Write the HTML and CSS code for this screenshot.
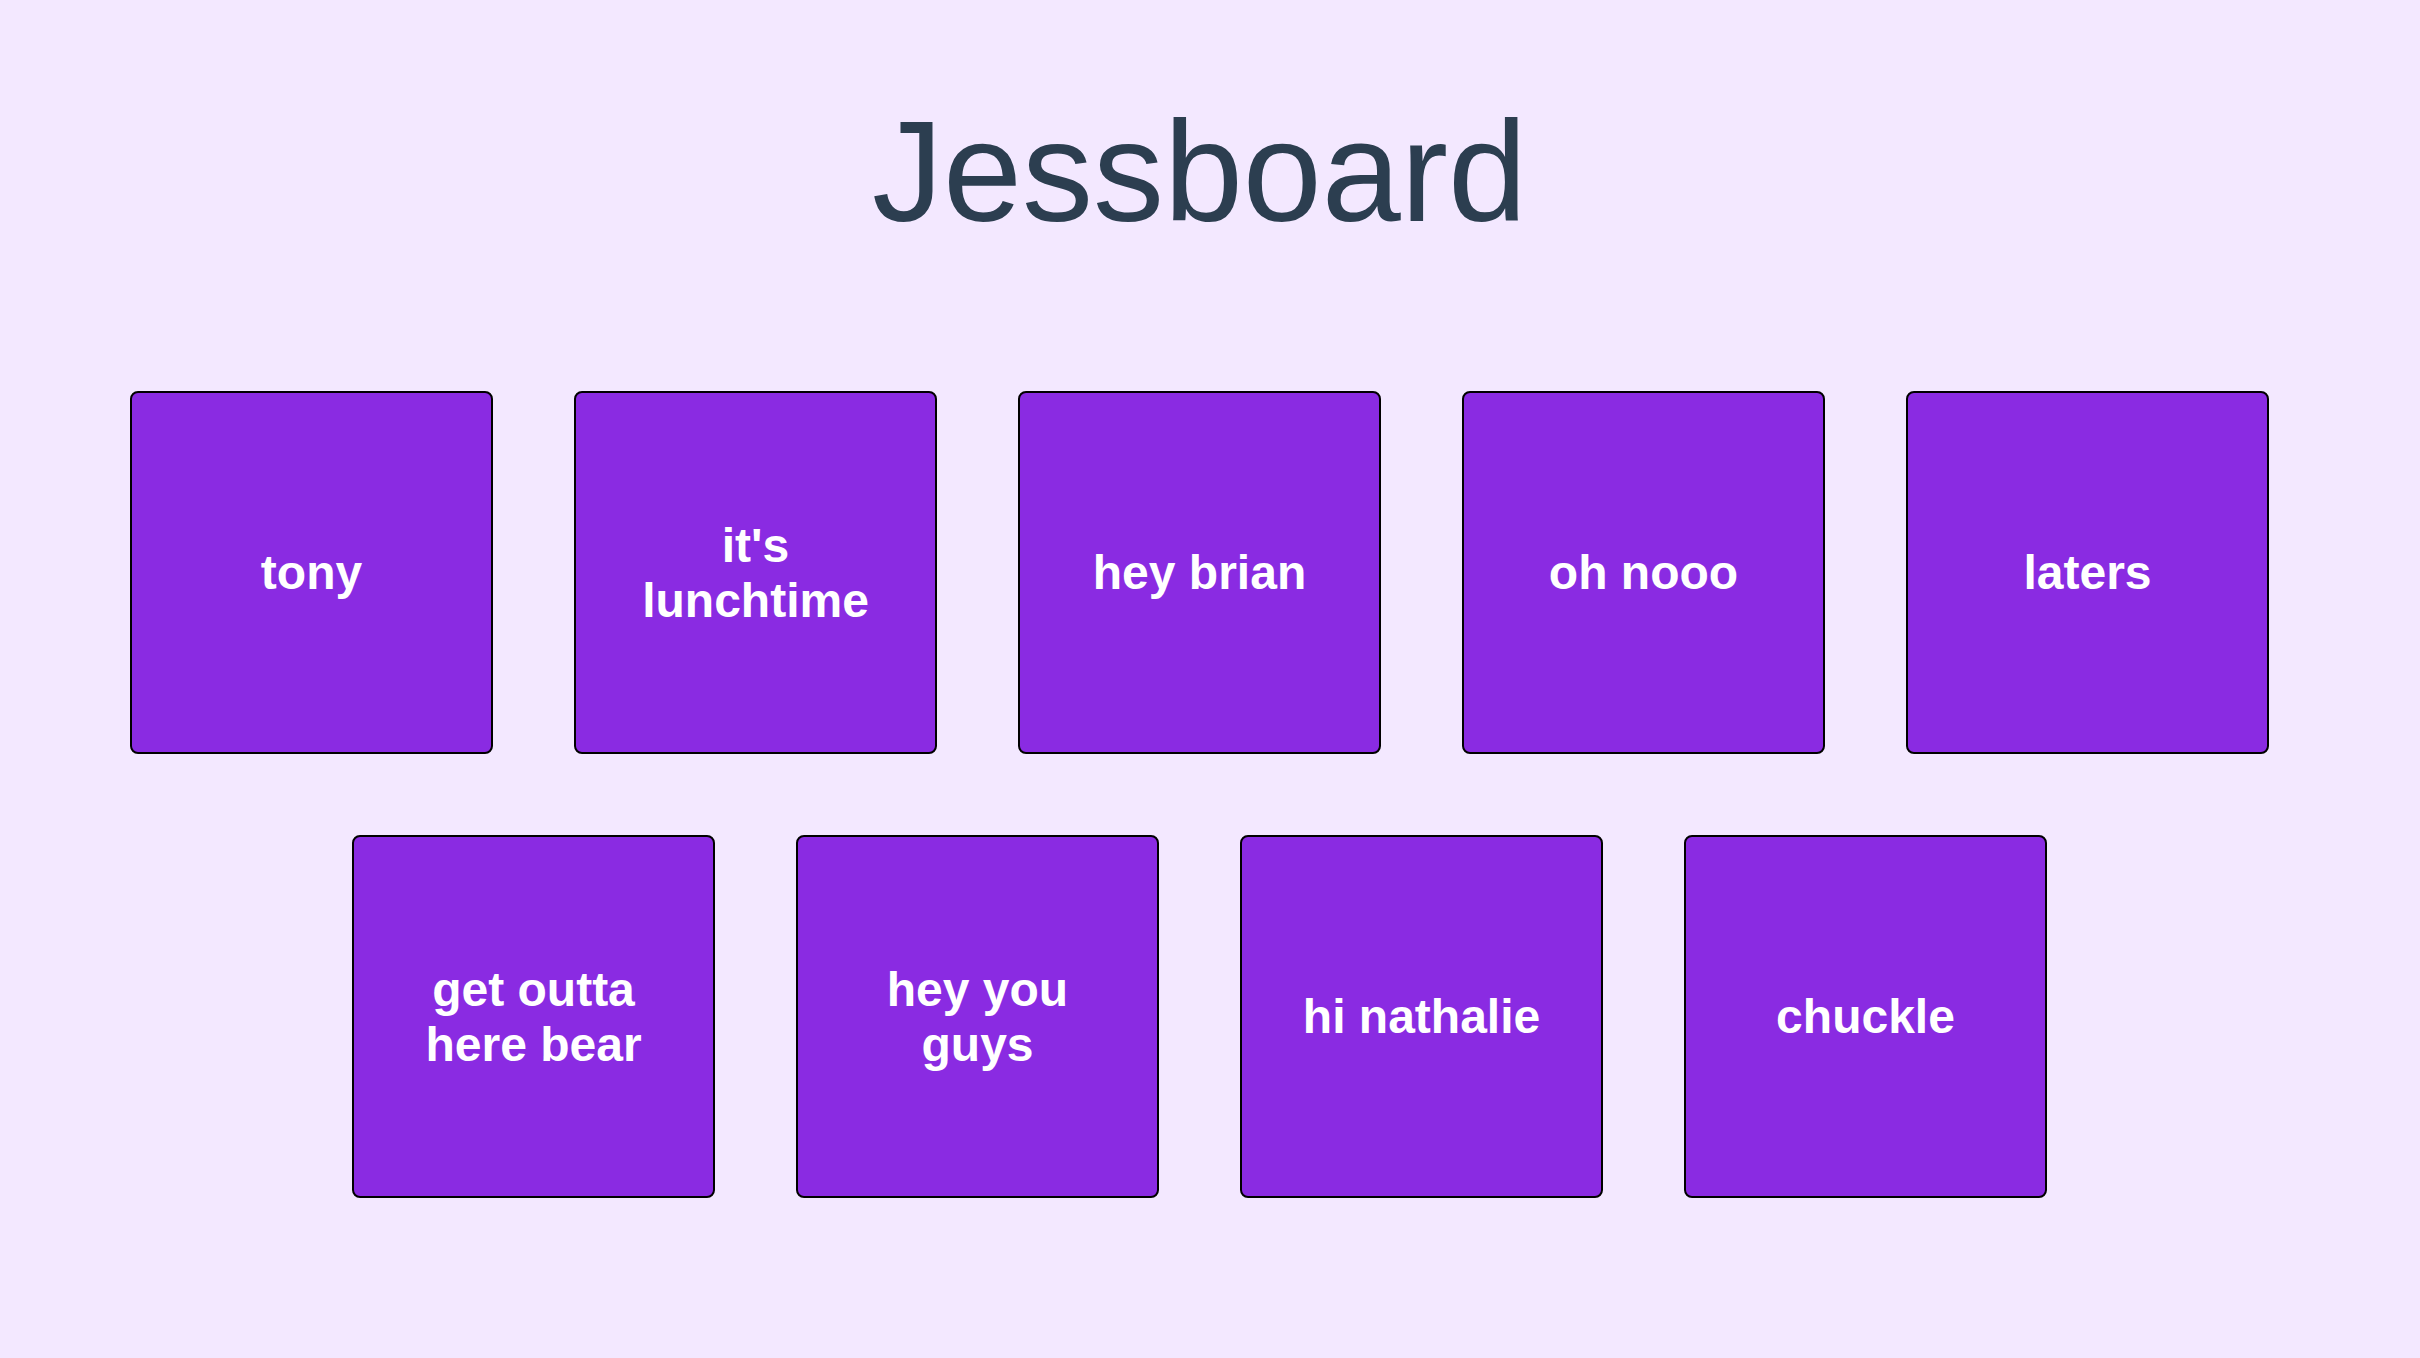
FILE: index.html
```html
<!DOCTYPE html>
<html lang="en">
<head>
<meta charset="UTF-8">
<meta name="viewport" content="width=device-width, initial-scale=1.0">
<title>Jessboard</title>
<link rel="stylesheet" href="styles.css">
</head>
<body>

<div class="page">
    <h1 class="title">Jessboard</h1>

    <div class="board">
        <div class="sound">tony</div>
        <div class="sound">it's lunchtime</div>
        <div class="sound">hey brian</div>
        <div class="sound">oh nooo</div>
        <div class="sound">laters</div>
        <div class="sound">get outta here bear</div>
        <div class="sound">hey you guys</div>
        <div class="sound">hi nathalie</div>
        <div class="sound">chuckle</div>
    </div>
</div>

</body>
</html>
```

FILE: styles.css
```css
body {
    margin: 0;
    font-family: "Liberation Sans", Arial, sans-serif;
    background-color: #f3e8ff;
    min-height: 100vh;
}

.page {
    padding: 101px 21px 40px 0;
    display: flex;
    flex-direction: column;
    align-items: center;
}

.title {
    margin: 0;
    font-size: 142px;
    font-weight: normal;
    line-height: 1;
    color: #2c3e50;
    text-align: center;
}

.board {
    width: 2139px;
    margin-top: 148px;
    display: flex;
    flex-wrap: wrap;
    justify-content: center;
    gap: 81px;
}

.sound {
    box-sizing: border-box;
    width: 363px;
    height: 363px;
    padding: 0 40px;
    display: flex;
    justify-content: center;
    align-items: center;
    text-align: center;
    background-color: #8a2be2;
    border: 2px solid #000;
    border-radius: 8px;
    color: #fff;
    font-size: 48px;
    font-weight: bold;
    line-height: normal;
}
```
